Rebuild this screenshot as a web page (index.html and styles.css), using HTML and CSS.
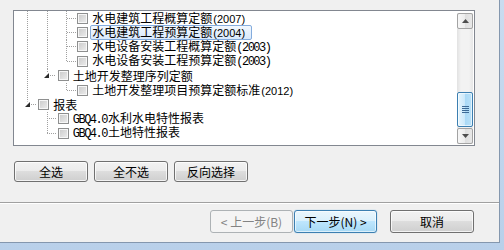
FILE: index.html
```html
<!DOCTYPE html>
<html>
<head>
  <meta charset="utf-8">
  <title>选择定额库</title>
  <link rel="stylesheet" href="styles.css">
</head>
<body>
  <div class="dialog">
    <div class="tree-box">
      <div class="tree">
        <div class="row">
          <span class="ind line"></span><span class="ind line"></span><span class="ind tee"></span>
          <span class="check"></span><span class="label">水电建筑工程概算定额<span class="num">(2007)</span></span>
        </div>
        <div class="row">
          <span class="ind line"></span><span class="ind line"></span><span class="ind tee"></span>
          <span class="check"></span><span class="label selected">水电建筑工程预算定额<span class="num">(2004)</span></span>
        </div>
        <div class="row">
          <span class="ind line"></span><span class="ind line"></span><span class="ind tee"></span>
          <span class="check"></span><span class="label">水电设备安装工程概算定额<span class="mono">(2003)</span></span>
        </div>
        <div class="row">
          <span class="ind line"></span><span class="ind line"></span><span class="ind corner"></span>
          <span class="check"></span><span class="label">水电设备安装工程预算定额<span class="mono">(2003)</span></span>
        </div>
        <div class="row">
          <span class="ind line"></span><span class="ind expander"><svg width="5" height="5"><polygon points="5,0 5,5 0,5" fill="#2b2b2b"/></svg></span>
          <span class="check"></span><span class="label">土地开发整理序列定额</span>
        </div>
        <div class="row">
          <span class="ind line"></span><span class="ind"></span><span class="ind corner"></span>
          <span class="check"></span><span class="label">土地开发整理项目预算定额标准<span class="num">(2012)</span></span>
        </div>
        <div class="row">
          <span class="ind expander"><svg width="5" height="5"><polygon points="5,0 5,5 0,5" fill="#2b2b2b"/></svg></span>
          <span class="check"></span><span class="label">报表</span>
        </div>
        <div class="row">
          <span class="ind"></span><span class="ind tee"></span>
          <span class="check"></span><span class="label"><span class="mono">GBQ4.0</span>水利水电特性报表</span>
        </div>
        <div class="row">
          <span class="ind"></span><span class="ind corner"></span>
          <span class="check"></span><span class="label"><span class="mono">GBQ4.0</span>土地特性报表</span>
        </div>
      </div>
      <div class="scrollbar">
        <div class="sb-btn">
          <svg width="7" height="4"><polygon points="3.5,0 7,4 0,4" fill="#4d4d4d"/></svg>
        </div>
        <div class="sb-space"></div>
        <div class="sb-thumb">
          <svg width="7" height="8">
            <rect x="0" y="0" width="7" height="1" fill="#3d6a95"/>
            <rect x="0" y="2" width="7" height="1" fill="#3d6a95"/>
            <rect x="0" y="4" width="7" height="1" fill="#3d6a95"/>
            <rect x="0" y="6" width="7" height="1" fill="#3d6a95"/>
          </svg>
        </div>
        <div class="sb-btn down">
          <svg width="7" height="4"><polygon points="0,0 7,0 3.5,4" fill="#4d4d4d"/></svg>
        </div>
      </div>
    </div>

    <div class="actions">
      <button class="btn">全选</button>
      <button class="btn">全不选</button>
      <button class="btn">反向选择</button>
    </div>

    <div class="sep"></div>

    <div class="wizard">
      <button class="btn prev" disabled>&lt; 上一步(B)</button>
      <button class="btn next">下一步(N) &gt;</button>
      <button class="btn cancel">取消</button>
    </div>
  </div>
</body>
</html>
```

FILE: styles.css
```css
body {
  margin: 0;
  width: 504px;
  height: 250px;
  overflow: hidden;
  background: linear-gradient(#c9dcf0, #b9d0ea);
  font-family: "Noto Sans CJK SC", sans-serif;
  font-size: 12px;
  color: #000;
}
.dialog {
  width: 500px;
  height: 243px;
  box-sizing: border-box;
  background: #f0f0f0;
  border-right: 1px solid #8497ae;
  border-bottom: 1px solid #8497ae;
  overflow: hidden;
}

/* tree view */
.tree-box {
  display: flex;
  width: 462px;
  height: 136px;
  box-sizing: border-box;
  margin: 10px 0 0 13px;
  border: 1px solid #828790;
  background: #fff;
}
.tree {
  flex: 1;
  overflow: hidden;
  padding-left: 3.25px;
}
.row {
  display: flex;
  align-items: center;
  height: 14.4px;
  white-space: nowrap;
}
.ind {
  flex: none;
  width: 19.5px;
  height: 100%;
  background-repeat: no-repeat;
}
.line {
  background-image: repeating-linear-gradient(to bottom, #a0a0a0 0 1px, transparent 1px 2px);
  background-size: 1px 100%;
  background-position: 9.75px 0;
}
.tee {
  background-image:
    repeating-linear-gradient(to bottom, #a0a0a0 0 1px, transparent 1px 2px),
    repeating-linear-gradient(to right, #a0a0a0 0 1px, transparent 1px 2px);
  background-size: 1px 100%, 9px 1px;
  background-position: 9.75px 0, right 50%;
}
.corner {
  background-image:
    repeating-linear-gradient(to bottom, #a0a0a0 0 1px, transparent 1px 2px),
    repeating-linear-gradient(to right, #a0a0a0 0 1px, transparent 1px 2px);
  background-size: 1px 50%, 9px 1px;
  background-position: 9.75px 0, right 50%;
}
.expander {
  display: flex;
  align-items: center;
  padding-left: 7.5px;
  box-sizing: border-box;
  background-image:
    repeating-linear-gradient(to bottom, #a0a0a0 0 1px, transparent 1px 2px),
    repeating-linear-gradient(to right, #a0a0a0 0 1px, transparent 1px 2px);
  background-size: 1px 30%, 6px 1px;
  background-position: 9.75px 0, right 50%;
}
.expander svg {
  display: block;
}
.check {
  flex: none;
  width: 11px;
  height: 11px;
  box-sizing: border-box;
  margin: 0 2px 0 1.5px;
  border: 1px solid #8e8f8f;
  background: linear-gradient(135deg, #c9c9c9, #eeeeee);
  box-shadow: inset 0 0 0 1px #f7f7f7;
}
.label {
  line-height: 12px;
  padding: 0 6px 0 1px;
  border: 1px solid transparent;
  border-radius: 2px;
}
.label.selected {
  border-color: #84acdd;
  background: linear-gradient(#f2f8fe, #d9e9fc);
}
.num {
  font-family: "Liberation Sans", sans-serif;
  font-size: 11px;
  margin-left: 1px;
}
.mono {
  font-family: "Liberation Mono", monospace;
  font-size: 12px;
  letter-spacing: -1.5px;
  margin-right: 1px;
}

/* scrollbar */
.scrollbar {
  flex: none;
  width: 16px;
  margin: 2px 1px 1px 0;
  display: flex;
  flex-direction: column;
  background: linear-gradient(to right, #e2e2e2, #f2f2f2 25%, #f2f2f2 75%, #e6e6e6);
}
.sb-btn {
  height: 16px;
  box-sizing: border-box;
  display: flex;
  align-items: center;
  justify-content: center;
  border: 1px solid #a3a3a3;
  border-radius: 2px;
  background: linear-gradient(to right, #f7f7f7, #ececec 50%, #dedede 50%, #e8e8e8);
}
.sb-btn.down {
  margin-top: 1px;
}
.sb-space {
  flex: 1;
}
.sb-thumb {
  height: 35px;
  box-sizing: border-box;
  display: flex;
  align-items: center;
  justify-content: center;
  border: 1px solid #3c7fb1;
  border-radius: 2px;
  background: linear-gradient(to right, #e6f5fd, #cbe8fa 50%, #a9d9f6 50%, #b9e1f8);
  box-shadow: inset 0 0 0 1px rgba(255, 255, 255, 0.6);
}
.sb-thumb svg {
  display: block;
}

/* buttons */
.btn {
  box-sizing: border-box;
  width: 74px;
  height: 21px;
  padding: 0;
  font-family: "Noto Sans CJK SC", sans-serif;
  font-size: 12px;
  line-height: 18px;
  color: #000;
  border: 1px solid #707070;
  border-radius: 3px;
  background: linear-gradient(#f2f2f2 0%, #ebebeb 50%, #dddddd 50%, #cfcfcf 100%);
  box-shadow: inset 0 0 0 1px rgba(255, 255, 255, 0.75);
}
.actions {
  display: flex;
  gap: 6px;
  margin: 15px 0 0 14px;
}
.sep {
  margin-top: 20px;
  border-top: 1px solid #a0a0a0;
  border-bottom: 1px solid #fff;
}
.wizard {
  display: flex;
  justify-content: flex-end;
  margin-top: 6px;
  padding-right: 25px;
}
.wizard .btn {
  width: 83px;
  height: 23px;
  line-height: 20px;
}
.wizard .btn.cancel {
  width: 84px;
  margin-left: 13px;
}
.wizard .btn.next {
  margin-left: 1px;
  border-color: #3c7fb1;
  background: linear-gradient(#eaf6fd 0%, #d9f0fc 50%, #bee6fd 50%, #a7d9f5 100%);
  box-shadow: inset 0 0 0 1px rgba(255, 255, 255, 0.6), 0 0 1px #5fa8dc;
}
.wizard .btn.prev {
  color: #838383;
  border-color: #adb2b5;
  background: #f4f4f4;
  box-shadow: none;
}
```
